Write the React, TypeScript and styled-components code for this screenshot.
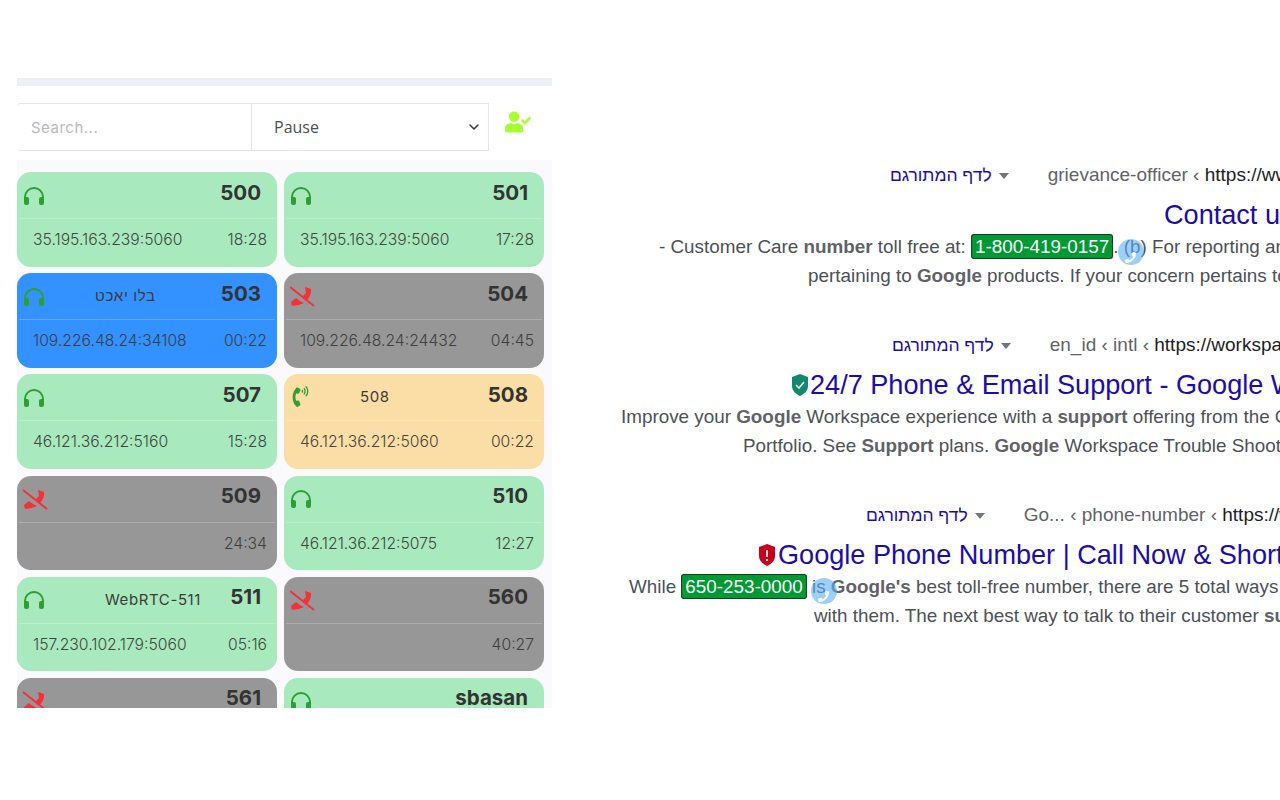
import styled, { createGlobalStyle } from 'styled-components'
import { FaPhoneVolume, FaUserCheck, FaPhone } from 'react-icons/fa'
import { ChevronDown } from 'lucide-react'

type Status = 'idle' | 'busy' | 'off' | 'ringing'

type Extension = {
  number: string
  status: Status
  address?: string
  time: string
  name?: string
  nameOffset?: number
}

const colors: Record<Status, string> = {
  idle: '#a8eabd',
  busy: '#3392ff',
  off: '#979797',
  ringing: '#fadea6',
}

const extensions: Extension[] = [
  { number: '500', status: 'idle', address: '35.195.163.239:5060', time: '18:28' },
  { number: '501', status: 'idle', address: '35.195.163.239:5060', time: '17:28' },
  { number: '503', status: 'busy', address: '109.226.48.24:34108', time: '00:22', name: 'בלו יאכט', nameOffset: 46 },
  { number: '504', status: 'off', address: '109.226.48.24:24432', time: '04:45' },
  { number: '507', status: 'idle', address: '46.121.36.212:5160', time: '15:28' },
  { number: '508', status: 'ringing', address: '46.121.36.212:5060', time: '00:22', name: '508', nameOffset: 44 },
  { number: '509', status: 'off', time: '24:34' },
  { number: '510', status: 'idle', address: '46.121.36.212:5075', time: '12:27' },
  { number: '511', status: 'idle', address: '157.230.102.179:5060', time: '05:16', name: 'WebRTC-511', nameOffset: 56 },
  { number: '560', status: 'off', time: '40:27' },
  { number: '561', status: 'off', time: '' },
  { number: 'sbasan', status: 'idle', time: '' },
]

const GlobalStyle = createGlobalStyle`
  html, body {
    margin: 0;
    background: #fff;
    font-family: 'Inter', 'Liberation Sans', sans-serif;
  }
`

const Page = styled.div`
  display: flex;
  width: 1280px;
  height: 800px;
  overflow: hidden;
`

const Panel = styled.div`
  display: flex;
  flex-direction: column;
  flex: none;
  width: 535px;
  height: 630px;
  margin: 78px 0 0 17px;
  overflow: hidden;
`

const TopBar = styled.div`
  flex: none;
  height: 8px;
  background: #edf0f7;
`

const Toolbar = styled.div`
  display: flex;
  flex: none;
  align-items: flex-start;
  height: 48px;
  margin-top: 17px;
`

const Search = styled.input`
  width: 234px;
  height: 48px;
  box-sizing: border-box;
  padding: 0 14px;
  border: 1px solid #e2e4f0;
  border-right: 0;
  border-left: 0;
  border-radius: 4px 0 0 4px;
  outline: none;
  font-family: 'Inter', sans-serif;
  font-size: 15px;
  letter-spacing: 0.5px;

  &::placeholder {
    color: #b9b9c6;
  }
`

const SelectWrap = styled.div`
  position: relative;
  width: 238px;
  height: 48px;
`

const Select = styled.select`
  appearance: none;
  width: 100%;
  height: 100%;
  padding: 0 22px;
  border: 1px solid #e2e4f0;
  border-radius: 0;
  background: #fff;
  color: #495057;
  font-family: 'Open Sans', sans-serif;
  font-size: 16px;
`

const Chevron = styled(ChevronDown)`
  position: absolute;
  top: 16px;
  right: 7px;
  color: #343a40;
  pointer-events: none;
`

const UserStatus = styled.div`
  margin: 6px 0 0 16px;
  color: #a6ff2e;
  font-size: 26px;
  line-height: 0;
`

const Grid = styled.div`
  display: grid;
  grid-template-columns: 260px 260px;
  grid-auto-rows: 94.6px;
  gap: 6.6px 7px;
  flex: 1;
  min-height: 0;
  margin-top: 9px;
  padding-top: 12px;
  background: #fafafc;
`

const Card = styled.div<{ $status: Status }>`
  display: flex;
  flex-direction: column;
  border-radius: 14px;
  background: ${({ $status }) => colors[$status]};
  color: #3b3b3b;
`

const CardHead = styled.div`
  display: flex;
  align-items: center;
  height: 47px;
  margin: 0 2px;
  padding: 0 14px 4px 4px;
  box-sizing: border-box;
  border-bottom: 1px solid rgba(255, 255, 255, 0.22);
`

const IconSlot = styled.div`
  display: flex;
  flex: none;
  width: 26px;
  margin-top: 5px;
`

const Name = styled.span<{ $offset: number }>`
  margin: 3px 0 0 ${({ $offset }) => $offset}px;
  font-size: 15px;
  letter-spacing: 0.6px;
  white-space: nowrap;
`

const Num = styled.span`
  margin: -2px 0 0 auto;
  color: #333;
  font-size: 20.5px;
  font-weight: 700;
`

const CardBody = styled.div`
  display: flex;
  align-items: center;
  justify-content: space-between;
  height: 41px;
  padding: 0 10px 0 16px;
  font-size: 15.7px;
  font-weight: 300;
  opacity: 0.95;
`

const Results = styled.div`
  display: flex;
  flex-direction: column;
  gap: 40px;
  flex: 1;
  min-width: 0;
  padding-top: 160px;
  overflow: hidden;
  font-family: 'Liberation Sans', Arial, sans-serif;
`

const Line = styled.div<{ $indent: number }>`
  height: 29px;
  padding-left: ${({ $indent }) => $indent}px;
  color: #4d5156;
  font-size: 18.85px;
  line-height: 29px;
  white-space: pre;

  b {
    color: #5f6368;
  }
`

const MetaLine = styled(Line)`
  height: 28px;
  line-height: 30px;
  font-size: 19px;
`

const TitleLine = styled(Line)`
  height: 35px;
  margin-top: 9px;
  color: #1a0dab;
  font-size: 27.1px;
  line-height: 36px;
`

const Translate = styled.span`
  color: #1a0dab;
  font-size: 17.5px;
`

const Caret = styled.span`
  display: inline-block;
  width: 0;
  height: 0;
  margin: 0 39px 0 7px;
  vertical-align: middle;
  border-top: 6px solid #70757a;
  border-right: 5px solid transparent;
  border-left: 5px solid transparent;
`

const Crumb = styled.span`
  color: #5f6368;
`

const Url = styled.span`
  color: #202124;
`

const PhoneTag = styled.span`
  padding: 1px 3px;
  border: 1px solid #1a3d1f;
  border-radius: 3px;
  background: #009933;
  color: #fff;
`

const CallDot = styled.span`
  position: relative;
`

const CallCircle = styled.span<{ $left: number; $top: number }>`
  position: absolute;
  top: ${({ $top }) => $top}px;
  left: ${({ $left }) => $left}px;
  display: flex;
  align-items: flex-end;
  justify-content: center;
  box-sizing: border-box;
  width: 26px;
  height: 26px;
  padding-bottom: 2px;
  border-radius: 50%;
  background: rgba(90, 175, 250, 0.6);
  color: #fff;
  font-size: 11px;
`

const Shield = styled.svg<{ $gap: number }>`
  display: inline-block;
  margin-right: ${({ $gap }) => $gap}px;
  vertical-align: -2px;
`

const HeadsetIcon = () => (
  <svg width='22' height='20' viewBox='0 0 22 20'>
    <path d='M2 14 V11 A9 9 0 0 1 20 11 V14' fill='none' stroke='#2f9e33' strokeWidth='2' />
    <rect x='1' y='11' width='5' height='8' rx='2' fill='#2f9e33' />
    <rect x='16' y='11' width='5' height='8' rx='2' fill='#2f9e33' />
  </svg>
)

const PhoneOffIcon = () => (
  <svg width='25' height='21' viewBox='0 0 25 21'>
    <path d='M15 1 L21 3 Q22 9 16 15 L13 10 L16 7 Z' fill='#f5303a' />
    <path d='M1 16 L6 12 L10 15 L14 17 Q8 20 3 20 Q1 19 1 16 Z' fill='#f5303a' />
    <path d='M0 1 L24 20' stroke='#f5303a' strokeWidth='2' />
  </svg>
)

const RingIcon = styled(FaPhoneVolume)`
  margin-top: -2px;
  color: #2f9e33;
  font-size: 21px;
`

const statusIcon = (status: Status) => {
  if (status === 'off') return <PhoneOffIcon />
  if (status === 'ringing') return <RingIcon />
  return <HeadsetIcon />
}

const App = () => {
  return (
    <Page>
      <GlobalStyle />
      <Panel>
        <TopBar />
        <Toolbar>
          <Search placeholder='Search...' />
          <SelectWrap>
            <Select defaultValue='pause'>
              <option value='pause'>Pause</option>
            </Select>
            <Chevron size={16} strokeWidth={2.4} />
          </SelectWrap>
          <UserStatus>
            <FaUserCheck />
          </UserStatus>
        </Toolbar>
        <Grid>
          {extensions.map((ext) => (
            <Card key={ext.number} $status={ext.status}>
              <CardHead>
                <IconSlot>{statusIcon(ext.status)}</IconSlot>
                {ext.name && <Name $offset={ext.nameOffset ?? 0}>{ext.name}</Name>}
                <Num>{ext.number}</Num>
              </CardHead>
              <CardBody>
                <span>{ext.address}</span>
                <span>{ext.time}</span>
              </CardBody>
            </Card>
          ))}
        </Grid>
      </Panel>
      <Results>
        <div>
          <MetaLine $indent={338}>
            <Translate>לדף המתורגם</Translate>
            <Caret />
            <Crumb>grievance-officer ‹ </Crumb>
            <Url>https://www.google.com</Url>
          </MetaLine>
          <TitleLine $indent={612}>Contact us</TitleLine>
          <Line $indent={107}>
            - Customer Care <b>number</b> toll free at: <PhoneTag>1-800-419-0157</PhoneTag>.{' '}
            <CallDot>
              (b)
              <CallCircle $left={-6} $top={3}>
                <FaPhone />
              </CallCircle>
            </CallDot>{' '}
            For reporting any issue
          </Line>
          <Line $indent={256}>
            pertaining to <b>Google</b> products. If your concern pertains to
          </Line>
        </div>
        <div>
          <MetaLine $indent={340}>
            <Translate>לדף המתורגם</Translate>
            <Caret />
            <Crumb>en_id ‹ intl ‹ </Crumb>
            <Url>https://workspace.google.com</Url>
          </MetaLine>
          <TitleLine $indent={239}>
            <Shield $gap={1} width='18' height='22' viewBox='0 0 18 22'>
              <path d='M9 0 L17 3 V12 C17 17 13 20 9 22 C5 20 1 17 1 12 V3 Z' fill='#14866d' />
              <path d='M5 11 L8 14 L13 8' fill='none' stroke='#d6f0e8' strokeWidth='1.6' />
            </Shield>
            24/7 Phone &amp; Email Support - Google Workspace
          </TitleLine>
          <Line $indent={69}>
            Improve your <b>Google</b> Workspace experience with a <b>support</b> offering from the Google
          </Line>
          <Line $indent={191}>
            Portfolio. See <b>Support</b> plans. <b>Google</b> Workspace Trouble Shooting
          </Line>
        </div>
        <div>
          <MetaLine $indent={314}>
            <Translate>לדף המתורגם</Translate>
            <Caret />
            <Crumb>Go... ‹ phone-number ‹ </Crumb>
            <Url>https://www.example.com</Url>
          </MetaLine>
          <TitleLine $indent={206}>
            <Shield $gap={2} width='18' height='22' viewBox='0 0 18 22'>
              <path d='M9 0 L17 3 V12 C17 17 13 20 9 22 C5 20 1 17 1 12 V3 Z' fill='#c4001c' />
              <path d='M9 6 V13 M9 15 V17' fill='none' stroke='#f5d5d5' strokeWidth='2' />
            </Shield>
            Google Phone Number | Call Now &amp; Short
          </TitleLine>
          <Line $indent={77}>
            While <PhoneTag>650-253-0000</PhoneTag>{' '}
            <CallDot>
              is
              <CallCircle $left={-1} $top={2}>
                <FaPhone />
              </CallCircle>
            </CallDot>{' '}
            <b>Google's</b> best toll-free number, there are 5 total ways
          </Line>
          <Line $indent={262}>
            with them. The next best way to talk to their customer <b>support</b>
          </Line>
        </div>
      </Results>
    </Page>
  )
}

export default App
